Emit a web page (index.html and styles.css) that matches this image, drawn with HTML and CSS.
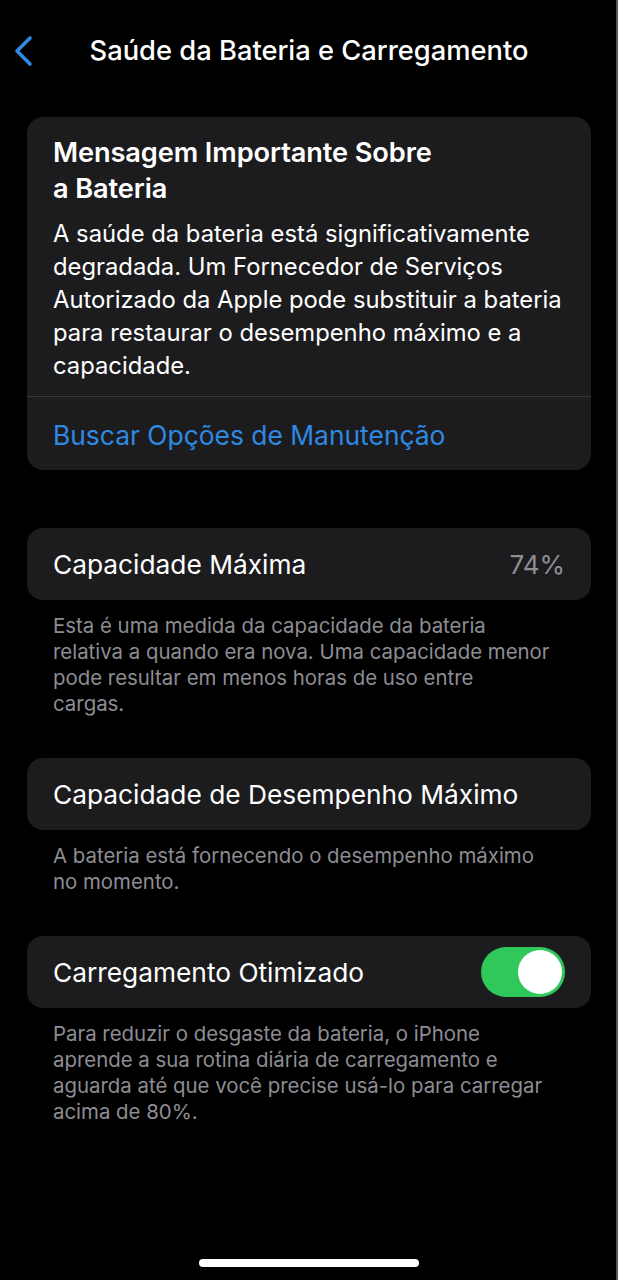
FILE: index.html
```html
<!DOCTYPE html>
<html lang="pt-BR">
<head>
<meta charset="utf-8">
<title>Saúde da Bateria e Carregamento</title>
<link rel="stylesheet" href="styles.css">
</head>
<body>
<div class="screen">
  <header class="nav">
    <div class="nav-left">
      <svg class="back" width="22" height="32" viewBox="0 0 22 32"><path d="M17 3 L4 16 L17 29" fill="none" stroke="#2f89e3" stroke-width="3.6" stroke-linecap="round" stroke-linejoin="round"/></svg>
    </div>
    <h1 class="nav-title">Saúde da Bateria e Carregamento</h1>
    <div class="nav-right"></div>
  </header>

  <main class="content">
    <section class="card message">
      <div class="message-body">
        <h2 class="message-title">Mensagem Importante Sobre<br>a Bateria</h2>
        <p class="message-text">A saúde da bateria está significativamente<br>degradada. Um Fornecedor de Serviços<br>Autorizado da Apple pode substituir a bateria<br>para restaurar o desempenho máximo e a<br>capacidade.</p>
      </div>
      <div class="link-row">
        <span class="link">Buscar Opções de Manutenção</span>
      </div>
    </section>

    <section class="group first">
      <div class="card row">
        <span class="row-label">Capacidade Máxima</span>
        <span class="row-value">74%</span>
      </div>
      <p class="footnote">Esta é uma medida da capacidade da bateria<br>relativa a quando era nova. Uma capacidade menor<br>pode resultar em menos horas de uso entre<br>cargas.</p>
    </section>

    <section class="group">
      <div class="card row">
        <span class="row-label">Capacidade de Desempenho Máximo</span>
      </div>
      <p class="footnote">A bateria está fornecendo o desempenho máximo<br>no momento.</p>
    </section>

    <section class="group">
      <div class="card row">
        <span class="row-label">Carregamento Otimizado</span>
        <span class="toggle"><span class="knob"></span></span>
      </div>
      <p class="footnote">Para reduzir o desgaste da bateria, o iPhone<br>aprende a sua rotina diária de carregamento e<br>aguarda até que você precise usá-lo para carregar<br>acima de 80%.</p>
    </section>
  </main>

  <div class="home-indicator"></div>
</div>
</body>
</html>
```

FILE: styles.css
```css
* { box-sizing: border-box; }

html, body {
  margin: 0;
  padding: 0;
  background: #000;
}

body {
  font-family: Inter, "Noto Sans", "Liberation Sans", sans-serif;
  color: #fff;
  -webkit-font-smoothing: antialiased;
}

.screen {
  width: 618px;
  height: 1280px;
  display: flex;
  flex-direction: column;
  box-shadow: inset -2px 0 0 #58585a;
  position: relative;
}

.nav {
  display: grid;
  grid-template-columns: 1fr auto 1fr;
  align-items: center;
  height: 104px;
  padding-bottom: 2px;
}

.nav-left {
  padding-left: 13px;
  display: flex;
  align-items: center;
}

.back { display: block; }

.nav-title {
  margin: 0;
  font-size: 27.3px;
  font-weight: 500;
  line-height: 32px;
  white-space: nowrap;
}

.content {
  padding: 13px 27px 0 27px;
  display: flex;
  flex-direction: column;
}

.card {
  background: #1c1c1e;
  border-radius: 16px;
}

.message-body {
  padding: 18px 10px 14px 26px;
  border-bottom: 1px solid #38383a;
}

.message-title {
  margin: 0 0 10px 0;
  font-size: 27.2px;
  font-weight: 600;
  line-height: 36px;
  letter-spacing: -0.1px;
}

.message-text {
  margin: 0;
  font-size: 23.8px;
  line-height: 33px;
  font-weight: 400;
  white-space: nowrap;
}

.link-row {
  height: 73px;
  display: flex;
  align-items: center;
  padding: 2px 26px 0 26px;
}

.link {
  color: #2f89e3;
  font-size: 26.4px;
}

.group {
  margin-top: 41px;
}

.group.first {
  margin-top: 58px;
}

.row {
  height: 72px;
  display: flex;
  align-items: center;
  justify-content: space-between;
  padding: 0 26px;
}

.row-label {
  font-size: 26.3px;
}

.row-value {
  font-size: 26px;
  color: #8d8d93;
}

.toggle {
  width: 84px;
  height: 50px;
  border-radius: 25px;
  background: #30c85a;
  position: relative;
}

.knob {
  position: absolute;
  top: 3px;
  right: 3px;
  width: 44px;
  height: 44px;
  border-radius: 50%;
  background: #fff;
}

.footnote {
  margin: 13px 0 0 0;
  padding: 0 10px 0 26px;
  font-size: 20.4px;
  line-height: 26px;
  color: #8d8d93;
  white-space: nowrap;
}

.home-indicator {
  position: absolute;
  left: 199px;
  top: 1259px;
  width: 220px;
  height: 8px;
  border-radius: 4px;
  background: #fff;
}
```
